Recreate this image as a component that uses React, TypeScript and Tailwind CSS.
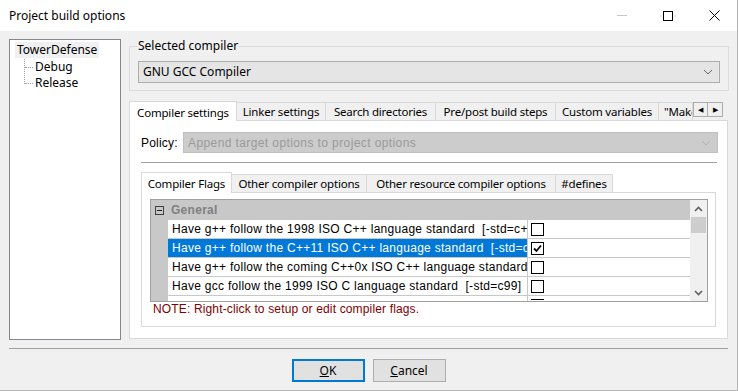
const ui = { fontFamily: '"Noto Sans", "Open Sans", sans-serif' };
const grid = { fontFamily: '"Liberation Sans", "DejaVu Sans", sans-serif' };

const outerTabs = [
  { label: "Compiler settings", w: "w-[108px]", active: true },
  { label: "Linker settings", w: "w-[89px]" },
  { label: "Search directories", w: "w-[110px]" },
  { label: "Pre/post build steps", w: "w-[120px]" },
  { label: "Custom variables", w: "w-[103px]" },
  { label: "\"Make\" commands", w: "w-[34px]", clip: true },
];

const innerTabs = [
  { label: "Compiler Flags", w: "w-[91px]", active: true },
  { label: "Other compiler options", w: "w-[135px]" },
  { label: "Other resource compiler options", w: "w-[189px]" },
  { label: "#defines", w: "w-[57px]" },
];

const flags = [
  { text: "Have g++ follow the 1998 ISO C++ language standard  [-std=c++98]", checked: false },
  { text: "Have g++ follow the C++11 ISO C++ language standard  [-std=c++11]", checked: true, selected: true },
  { text: "Have g++ follow the coming C++0x ISO C++ language standard  [-std=c++0x]", checked: false },
  { text: "Have gcc follow the 1999 ISO C language standard  [-std=c99]", checked: false },
];

type Tab = { label: string; w: string; active?: boolean; clip?: boolean };

function Chevron({ color = "#606060" }: { color?: string }) {
  return (
    <svg width="10" height="6" viewBox="0 0 10 6">
      <polyline points="1,1 5,5 9,1" fill="none" stroke={color} strokeWidth="1" />
    </svg>
  );
}

function Checkbox({ checked }: { checked: boolean }) {
  return (
    <div className="w-[13px] h-[13px] border border-[#000] bg-white flex items-center justify-center">
      {checked && (
        <svg width="9" height="9" viewBox="0 0 9 9">
          <path d="M1 4.5 L3.5 7 L8 1.5" fill="none" stroke="#000" strokeWidth="1.8" />
        </svg>
      )}
    </div>
  );
}

function TabStrip({ tabs, h }: { tabs: Tab[]; h: string }) {
  return (
    <div className={`flex items-end ${h}`}>
      {tabs.map((t) =>
        t.active ? (
          <div key={t.label} className={`${t.w} h-full shrink-0 bg-white border border-b-0 border-[#d9d9d9] flex items-start pt-[2px] justify-center text-[11.5px] tracking-[-0.2px] text-black relative -mb-px z-10`}>
            {t.label}
          </div>
        ) : (
          <div key={t.label} className={`${t.w} h-[18px] shrink-0 bg-[#f0f0f0] border border-b-0 border-l-0 border-[#d9d9d9] flex items-center text-[11.5px] tracking-[-0.2px] text-black overflow-hidden whitespace-nowrap ${t.clip ? "justify-start pl-[5px]" : "justify-center"}`}>
            {t.label}
          </div>
        )
      )}
    </div>
  );
}

export default function App() {
  return (
    <div className="w-[738px] h-[391px] bg-[#f0f0f0] flex flex-col border-r border-b border-[#b4b4b4] overflow-hidden" style={ui}>
      {/* title bar */}
      <div className="h-[31px] bg-white flex items-center shrink-0">
        <span className="pl-[9px] text-[12px] text-black">Project build options</span>
        <div className="ml-auto flex items-center h-full">
          <div className="w-[46px] h-full flex items-center justify-center">
            <div className="w-[10px] h-px bg-[#c8c8c8]" />
          </div>
          <div className="w-[46px] h-full flex items-center justify-center">
            <div className="w-[10px] h-[10px] border border-black" />
          </div>
          <div className="w-[46px] h-full flex items-center justify-center">
            <svg width="11" height="11" viewBox="0 0 11 11">
              <path d="M0.5 0.5 L10.5 10.5 M10.5 0.5 L0.5 10.5" stroke="#000" strokeWidth="1" />
            </svg>
          </div>
        </div>
      </div>

      {/* body */}
      <div className="flex pl-[9px] pt-[8px] gap-[8px] h-[309px] shrink-0">
        {/* targets tree */}
        <div className="w-[112px] h-[301px] border border-[#828790] bg-white pt-[1px] pl-[5px] text-[12px] text-black">
          <div className="inline-block bg-[#f0f0f0] px-[2px] leading-[16px]">TowerDefense</div>
          <div className="relative pl-[20px]">
            <div className="absolute left-[9px] top-0 h-[25px] border-l border-dotted border-[#a0a0a0]" />
            <div className="relative flex items-center leading-[16px]">
              <div className="absolute -left-[10px] top-[8px] w-[8px] border-t border-dotted border-[#a0a0a0]" />
              <span>Debug</span>
            </div>
            <div className="relative flex items-center leading-[16px]">
              <div className="absolute -left-[10px] top-[8px] w-[8px] border-t border-dotted border-[#a0a0a0]" />
              <span>Release</span>
            </div>
          </div>
        </div>

        {/* right column */}
        <div className="w-[600px] flex flex-col">
          <fieldset className="border border-[#dcdcdc] -mt-[1px] px-[8px] pb-[7px]">
            <legend className="text-[12px] text-black leading-[16px] px-0">Selected compiler</legend>
            <div className="mt-[7px] h-[22px] border border-[#adadad] bg-[#e5e5e5] flex items-center pl-[4px] pr-[6px] text-[12px] text-black">
              <span>GNU GCC Compiler</span>
              <span className="ml-auto"><Chevron /></span>
            </div>
          </fieldset>

          <div className="mt-[9px] flex items-end">
            <TabStrip tabs={outerTabs} h="h-[20px]" />
            <div className="flex h-[15px] mb-[3px]">
              <div className="w-[15px] h-full border border-[#adadad] bg-[#f0f0f0] flex items-center justify-center text-[7px] leading-none">◀</div>
              <div className="w-[15px] h-full border border-l-0 border-[#adadad] bg-[#f0f0f0] flex items-center justify-center text-[7px] leading-none">▶</div>
            </div>
          </div>

          {/* compiler settings panel */}
          <div className="h-[219px] w-[599px] border border-[#d9d9d9] bg-white flex flex-col px-[11px] pr-[9px]">
            <div className="mt-[11px] flex items-center h-[21px]">
              <span className="text-[12px] text-black w-[42px] tracking-[0.2px]" style={grid}>Policy:</span>
              <div className="flex-1 h-full bg-[#cccccc] border border-[#c0c0c0] flex items-center pl-[4px] pr-[6px] text-[12px] tracking-[0.4px] text-[#9a9a9a]" style={grid}>
                <span>Append target options to project options</span>
                <span className="ml-auto"><Chevron color="#b0b0b0" /></span>
              </div>
            </div>
            <div className="mt-[9px] mr-[1px] border-t border-[#a0a0a0]" />

            <div className="mt-[8px]">
              <TabStrip tabs={innerTabs} h="h-[21px]" />
            </div>
            <div className="w-[575px] h-[135px] border border-[#d9d9d9] bg-white pl-[8px] pt-[6px]">
              <div className="w-[558px] h-[103px] border border-[#a0a0a0] flex text-[12px] tracking-[0.28px]" style={grid}>
                <div className="w-[539px] flex flex-col overflow-hidden">
                  <div className="h-[20px] shrink-0 bg-[#c8c8c8] flex items-center pl-[4px] gap-[7px]">
                    <div className="w-[9px] h-[9px] border border-[#404040] flex items-center justify-center">
                      <div className="w-[5px] h-px bg-[#202020]" />
                    </div>
                    <span className="font-bold text-[#808080]">General</span>
                  </div>
                  {flags.map((f) => (
                    <div key={f.text} className="h-[19px] shrink-0 flex">
                      <div className="w-[17px] bg-[#c8c8c8] shrink-0" />
                      <div className={`w-[360px] shrink-0 border-b border-r border-[#c8c8c8] flex items-center pl-[4px] overflow-hidden whitespace-pre ${f.selected ? "bg-[#0078d7] text-white" : "text-black"}`}>
                        {f.text}
                      </div>
                      <div className="flex-1 border-b border-[#c8c8c8] flex items-center pl-[3px]">
                        <Checkbox checked={f.checked} />
                      </div>
                    </div>
                  ))}
                  <div className="h-[5px] shrink-0 flex">
                    <div className="w-[17px] bg-[#c8c8c8] shrink-0" />
                    <div className="w-[360px] shrink-0 border-r border-[#c8c8c8]" />
                    <div className="flex-1 pl-[3px] pt-[3px]">
                      <div className="w-[13px] border-t border-black" />
                    </div>
                  </div>
                </div>
                <div className="w-[17px] bg-[#f0f0f0] flex flex-col items-center">
                  <div className="h-[17px] flex items-center justify-center">
                    <svg width="9" height="6" viewBox="0 0 9 6">
                      <polyline points="1,5 4.5,1.5 8,5" fill="none" stroke="#606060" strokeWidth="1.6" />
                    </svg>
                  </div>
                  <div className="w-[15px] h-[16px] bg-[#cdcdcd]" />
                  <div className="flex-1" />
                  <div className="h-[17px] flex items-center justify-center">
                    <svg width="9" height="6" viewBox="0 0 9 6">
                      <polyline points="1,1 4.5,4.5 8,1" fill="none" stroke="#606060" strokeWidth="1.6" />
                    </svg>
                  </div>
                </div>
              </div>
              <div className="pl-[3px] text-[12px] leading-[15px] tracking-[0.15px] text-[#800000]" style={grid}>
                NOTE: Right-click to setup or edit compiler flags.
              </div>
            </div>
          </div>
        </div>
      </div>

      {/* footer */}
      <div className="mx-[9px] mt-[8px] border-t border-[#a0a0a0] shrink-0" />
      <div className="mt-[10px] flex justify-center gap-[8px]">
        <button className="w-[73px] h-[23px] border-2 border-[#0078d7] bg-[#e1e1e1] text-[12px] text-black">
          <span className="underline">O</span>K
        </button>
        <button className="w-[73px] h-[23px] border border-[#adadad] bg-[#e1e1e1] text-[12px] text-black">
          <span className="underline">C</span>ancel
        </button>
      </div>
    </div>
  );
}
